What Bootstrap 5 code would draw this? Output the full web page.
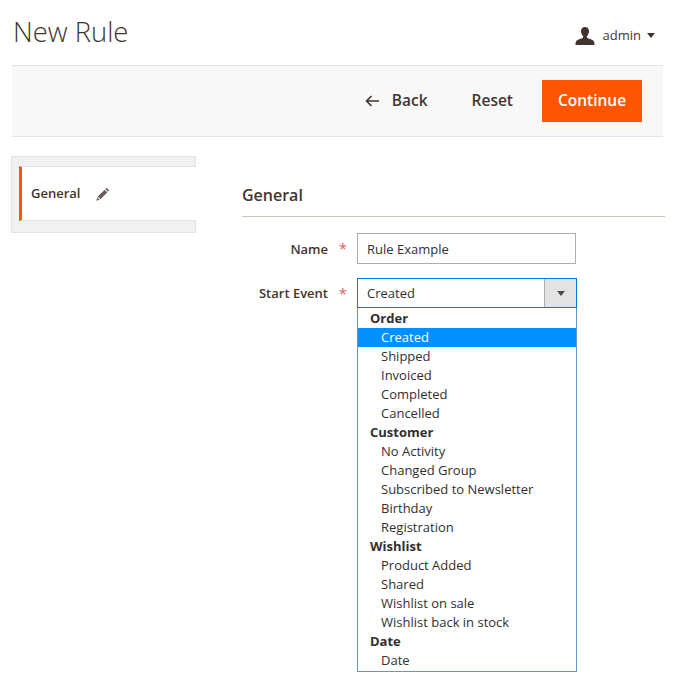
<!DOCTYPE html>
<html lang="en">
<head>
  <meta charset="UTF-8" />
  <title>New Rule</title>
  <meta name="viewport" content="width=device-width, initial-scale=1" />
  <link href="https://cdn.jsdelivr.net/npm/bootstrap@5.3.0/dist/css/bootstrap.min.css" rel="stylesheet">
  <style>
    body {
      background: #fff;
      color: #303030;
      font-family: "Open Sans", "Liberation Sans", sans-serif;
      font-size: 13px;
      overflow: hidden;
    }
    .page-head {
      height: 65px;
      padding: 0 20px 0 13px;
    }
    .page-name {
      font-size: 27.4px;
      font-weight: 300;
      line-height: 36px;
      margin: -1px 0 0 0;
      color: #41362f;
    }
    .user-box { padding-top: 6px; }
    .user-name { color: #41362f; }
    .user-caret {
      margin-left: 6px;
      border-left: 4px solid transparent;
      border-right: 4px solid transparent;
      border-top: 5px solid #41362f;
    }
    .action-bar {
      width: 651px;
      height: 72px;
      margin-left: 12px;
      padding-right: 21px;
      background: #f8f8f8;
      border-top: 1px solid #e3e3e3;
      border-bottom: 1px solid #e3e3e3;
    }
    .bar-btn {
      font-size: 15.5px;
      font-weight: 600;
      color: #41362f;
      background: none;
      border: 0;
      padding: 0;
    }
    .btn-reset { margin: 0 29px 0 44px; }
    .btn-continue {
      width: 100px;
      height: 42px;
      background: #ff5501;
      color: #fff;
      border-radius: 0;
      border: 0;
      font-size: 15.5px;
      font-weight: 600;
      padding: 0;
    }
    .main-area { padding-top: 19px; }
    .side-tabs {
      width: 185px;
      height: 77px;
      margin-left: 11px;
      padding: 9px 0 11px 7px;
      background: #f1f1f1;
      border: 1px solid #e3e3e3;
    }
    .side-item {
      height: 55px;
      background: #fff;
      border-left: 3px solid #ff5501;
      border-top: 1px solid #e3e3e3;
      border-bottom: 1px solid #e3e3e3;
      padding-left: 9px;
      font-weight: 600;
      color: #41362f;
      margin-right: -1px;
    }
    .side-text { padding-top: 1px; }
    .form-side {
      width: 423px;
      margin-left: 46px;
      padding-top: 26px;
    }
    .form-title {
      font-size: 16px;
      font-weight: 600;
      line-height: 26px;
      margin: 0;
      padding-bottom: 8px;
      border-bottom: 1px solid #cfc4b8;
      color: #41362f;
    }
    .field-label {
      width: 87px;
      padding: 2px 1px 0 0;
      text-align: right;
      font-weight: 600;
      color: #41362f;
    }
    .req-mark {
      width: 28px;
      text-align: center;
      color: #e85d5d;
      font-size: 15px;
      line-height: 1;
    }
    .select-label { line-height: 30px; padding-top: 0; }
    .name-input {
      width: 219px;
      height: 31px;
      border: 1px solid #adadad;
      border-radius: 0;
      padding: 0 9px;
      font-size: 13px;
      color: #303030;
    }
    .field-two { margin-top: 14px; }
    .select-wrap { width: 220px; }
    .select-top {
      height: 30px;
      border: 1px solid #007bdb;
      padding-left: 9px;
    }
    .select-value { padding-top: 1px; }
    .select-arrow {
      width: 32px;
      height: 100%;
      background: #e3e3e3;
      border-left: 1px solid #adadad;
    }
    .select-caret {
      border-left: 4px solid transparent;
      border-right: 4px solid transparent;
      border-top: 5px solid #514943;
    }
    .option-list {
      border: 1px solid #6497d2;
      border-top: 0;
      margin: 0;
      padding: 1px 0 0 0;
      height: 364px;
    }
    .option-list li {
      height: 19px;
      line-height: 19px;
      padding-left: 23px;
      color: #303030;
      white-space: nowrap;
    }
    .option-list li.opt-group {
      padding-left: 12px;
      font-weight: 700;
    }
    .option-list li.opt-current {
      background: #0090ff;
      color: #fff;
    }
  </style>
</head>
<body>

<div class="page-head d-flex justify-content-between align-items-center">
  <h1 class="page-name">New Rule</h1>
  <div class="user-box d-flex align-items-center">
    <svg width="20" height="18" viewBox="0 0 20 18" class="me-2">
      <path fill="#41362f" d="M10 0c2.600 0 4 1.900 4 4.300 0 2-1 3.600-1.900 4.600-.4.500-.3 1.700.4 2.100 1.500.9 5.500 1.600 6.500 3.400.4.800.5 2.300.5 3.600H.5c0-1.300.1-2.800.5-3.600 1-1.800 5-2.500 6.500-3.400.7-.4.8-1.600.4-2.100C7 7.900 6 6.300 6 4.300 6 1.900 7.400 0 10 0z"/>
    </svg>
    <span class="user-name">admin</span>
    <span class="user-caret"></span>
  </div>
</div>

<div class="action-bar d-flex justify-content-end align-items-center">
  <button class="bar-btn d-flex align-items-center" type="button">
    <svg width="15" height="12" viewBox="0 0 15 12" class="me-2">
      <path fill="none" stroke="#41362f" stroke-width="1.600" d="M14 6H2M6.500 1 1.500 6l5 5"/>
    </svg>
    <span class="ms-1">Back</span>
  </button>
  <button class="bar-btn btn-reset" type="button">Reset</button>
  <button class="btn btn-continue" type="button">Continue</button>
</div>

<div class="main-area d-flex align-items-start">
  <div class="side-tabs">
    <div class="side-item d-flex align-items-center">
      <span class="side-text">General</span>
      <svg width="14" height="14" viewBox="0 0 14 14" class="ms-3">
        <path fill="#6b5f57" d="M10.500.8l2.700 2.700-1.200 1.200-2.700-2.700zM8.600 2.700l2.700 2.700-6.900 6.900-2.700-2.700zM1.200 10.400l2.400 2.400-3.300.9z"/>
      </svg>
    </div>
  </div>

  <div class="form-side">
    <h2 class="form-title">General</h2>

    <div class="d-flex align-items-center mt-3">
      <label class="field-label">Name</label>
      <span class="req-mark">*</span>
      <input class="form-control name-input" type="text" value="Rule Example">
    </div>

    <div class="d-flex align-items-start field-two">
      <label class="field-label select-label">Start Event</label>
      <span class="req-mark select-label">*</span>
      <div class="select-wrap">
        <div class="select-top d-flex justify-content-between align-items-center">
          <span class="select-value">Created</span>
          <span class="select-arrow d-flex justify-content-center align-items-center">
            <span class="select-caret"></span>
          </span>
        </div>
        <ul class="option-list list-unstyled">
          <li class="opt-group">Order</li>
          <li class="opt-current">Created</li>
          <li>Shipped</li>
          <li>Invoiced</li>
          <li>Completed</li>
          <li>Cancelled</li>
          <li class="opt-group">Customer</li>
          <li>No Activity</li>
          <li>Changed Group</li>
          <li>Subscribed to Newsletter</li>
          <li>Birthday</li>
          <li>Registration</li>
          <li class="opt-group">Wishlist</li>
          <li>Product Added</li>
          <li>Shared</li>
          <li>Wishlist on sale</li>
          <li>Wishlist back in stock</li>
          <li class="opt-group">Date</li>
          <li>Date</li>
        </ul>
      </div>
    </div>
  </div>
</div>

</body>
</html>
